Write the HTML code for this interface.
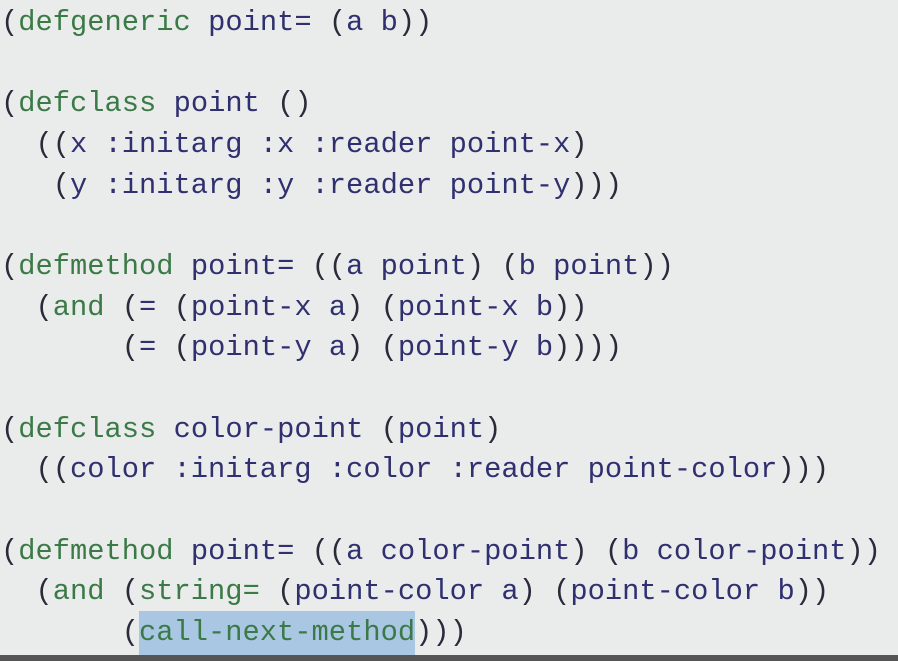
<!DOCTYPE html>
<html><head><style>
html,body{margin:0;padding:0;}
body{width:898px;height:661px;overflow:hidden;background:#e9ecea;position:relative;}
pre{margin:0;position:absolute;left:1px;top:3px;font-family:"Liberation Mono",monospace;font-size:28.75px;line-height:40.67px;color:#2a2a3a;}
.g{color:#3b7a47}
.n{color:#303070}
.hl{background:#a9c6e3;padding:5px 0 6px 0}
.bar{position:absolute;left:0;right:0;bottom:0;height:6px;background:#555}
</style></head><body>
<pre>(<span class="g">defgeneric</span> <span class="n">point=</span> (<span class="n">a b</span>))

(<span class="g">defclass</span> <span class="n">point</span> ()
  ((<span class="n">x :initarg :x :reader point-x</span>)
   (<span class="n">y :initarg :y :reader point-y</span>)))

(<span class="g">defmethod</span> <span class="n">point=</span> ((<span class="n">a point</span>) (<span class="n">b point</span>))
  (<span class="g">and</span> (<span class="n">=</span> (<span class="n">point-x a</span>) (<span class="n">point-x b</span>))
       (<span class="n">=</span> (<span class="n">point-y a</span>) (<span class="n">point-y b</span>))))

(<span class="g">defclass</span> <span class="n">color-point</span> (<span class="n">point</span>)
  ((<span class="n">color :initarg :color :reader point-color</span>)))

(<span class="g">defmethod</span> <span class="n">point=</span> ((<span class="n">a color-point</span>) (<span class="n">b color-point</span>))
  (<span class="g">and</span> (<span class="g">string=</span> (<span class="n">point-color a</span>) (<span class="n">point-color b</span>))
       (<span class="g hl">call-next-method</span>)))</pre>
<div class="bar"></div>
</body></html>
